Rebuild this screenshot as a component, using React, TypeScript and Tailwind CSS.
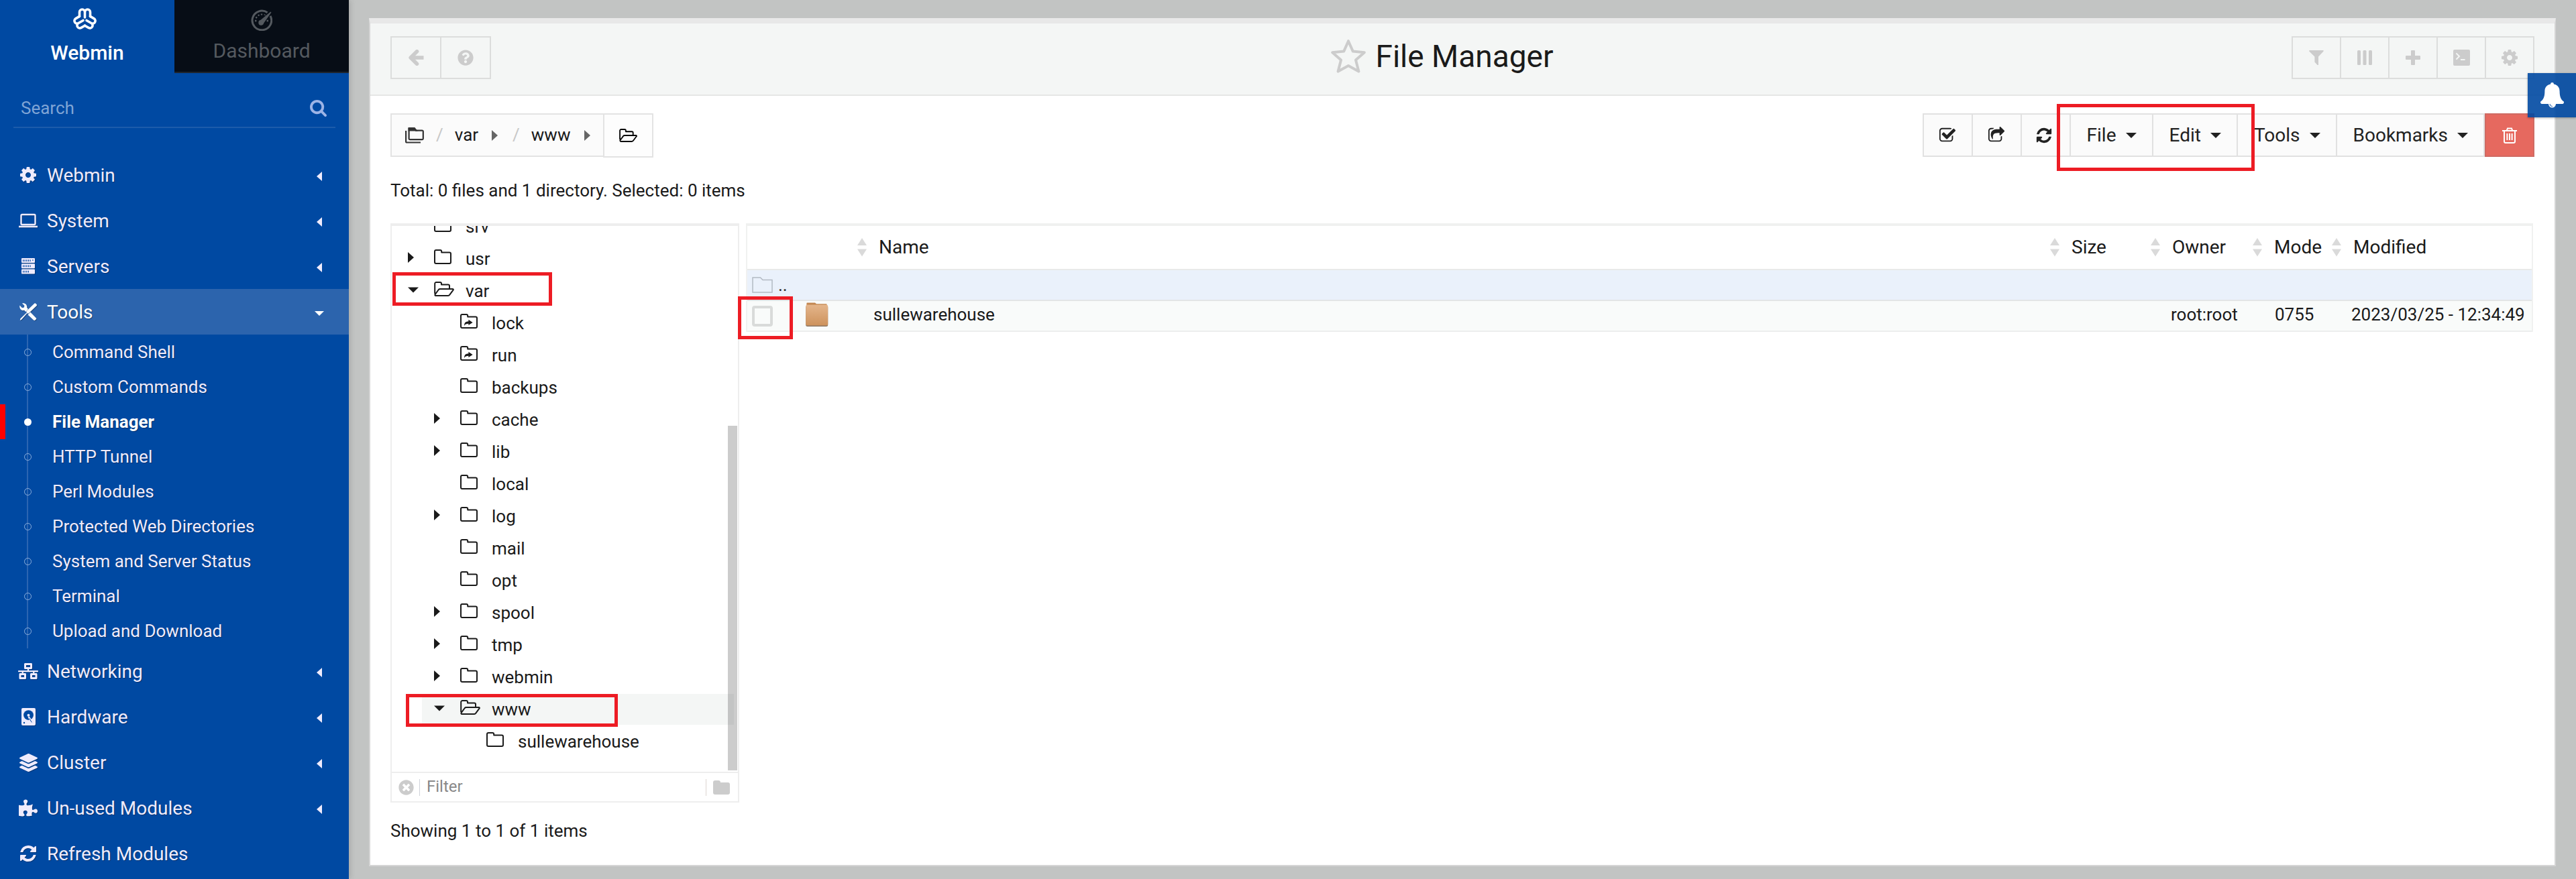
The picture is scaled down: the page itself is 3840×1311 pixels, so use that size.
import React, { ReactNode } from "react";
import { FaNetworkWired, FaLayerGroup, FaPuzzlePiece, FaTimesCircle, FaQuestionCircle } from "react-icons/fa";

/* ---------- icons ---------- */

type IconProps = { className?: string };

const Solid = ({ d, className, box = "0 0 1792 1792" }: { d: string; className?: string; box?: string }) => (
  <svg viewBox={box} className={className} fill="currentColor" aria-hidden="true">
    <path d={d} />
  </svg>
);

const GEAR =
  "M1152 896q0-106-75-181t-181-75-181 75-75 181 75 181 181 75 181-75 75-181zm512-109v222q0 12-8 23t-20 13l-185 28q-19 54-39 91 35 50 107 138 10 12 10 25t-9 23q-27 37-99 108t-94 71q-12 0-26-9l-138-108q-44 23-91 38-16 136-29 186-7 28-36 28h-222q-14 0-24.5-8.5t-11.5-21.5l-28-184q-49-16-90-37l-141 107q-10 9-25 9-14 0-25-11-126-114-165-168-7-10-7-23 0-12 8-23 15-21 51-66.5t54-70.5q-27-50-41-99l-183-27q-13-2-21-12.5t-8-23.5v-222q0-12 8-23t19-13l186-28q14-46 39-92-40-57-107-138-10-12-10-24 0-10 9-23 26-36 98.5-107.5t94.5-71.5q13 0 26 10l138 107q44-23 91-38 16-136 29-186 7-28 36-28h222q14 0 24.5 8.5t11.5 21.5l28 184q49 16 90 37l142-107q9-9 24-9 13 0 25 10 129 119 165 170 7 8 7 22 0 12-8 23-15 21-51 66.5t-54 70.5q26 50 41 98l183 28q13 2 21 12.5t8 23.5z";
const REFRESH =
  "M1639 1056q0 5-1 7-64 268-268 434.5t-478 166.5q-146 0-282.5-55t-243.5-157l-129 129q-19 19-45 19t-45-19-19-45v-448q0-26 19-45t45-19h448q26 0 45 19t19 45-19 45l-137 137q71 66 161 102t187 36q134 0 250-65t186-179q11-17 53-117 8-23 30-23h192q13 0 22.5 9.5t9.5 22.5zm25-800v448q0 26-19 45t-45 19h-448q-26 0-45-19t-19-45 19-45l138-138q-148-137-349-137-134 0-250 65t-186 179q-11 17-53 117-8 23-30 23h-199q-13 0-22.5-9.5t-9.5-22.5v-7q65-268 270-434.5t480-166.5q146 0 284 55.5t245 156.5l130-129q19-19 45-19t45 19 19 45z";
const SEARCH =
  "M1216 832q0-185-131.5-316.5t-316.5-131.5-316.5 131.5-131.5 316.5 131.5 316.5 316.5 131.5 316.5-131.5 131.5-316.5zm512 832q0 52-38 90t-90 38q-54 0-90-38l-343-342q-179 124-399 124-143 0-273.5-55.5t-225-150-150-225-55.5-273.5 55.5-273.5 150-225 225-150 273.5-55.5 273.5 55.5 225 150 150 225 55.5 273.5q0 220-124 399l343 343q37 37 37 90z";
const CHECK_SQUARE =
  "M1472 930v318q0 119-84.5 203.5t-203.5 84.5h-832q-119 0-203.5-84.5t-84.5-203.5v-832q0-119 84.5-203.5t203.5-84.5h832q63 0 117 25 15 7 18 23 3 17-9 29l-49 49q-10 10-23 10-3 0-9-2-23-6-45-6h-832q-66 0-113 47t-47 113v832q0 66 47 113t113 47h832q66 0 113-47t47-113v-254q0-13 9-22l64-64q10-10 23-10 6 0 12 3 20 8 20 29zm231-489l-814 814q-24 24-57 24t-57-24l-430-430q-24-24-24-57t24-57l110-110q24-24 57-24t57 24l263 263 647-647q24-24 57-24t57 24l110 110q24 24 24 57t-24 57z";
const SHARE_SQUARE =
  "M1472 989v259q0 119-84.5 203.5t-203.5 84.5h-832q-119 0-203.5-84.5t-84.5-203.5v-832q0-119 84.5-203.5t203.5-84.5h255q13 0 22.5 9.5t9.5 22.5q0 27-26 32-77 26-133 60-10 4-16 4h-112q-66 0-113 47t-47 113v832q0 66 47 113t113 47h832q66 0 113-47t47-113v-214q0-19 18-29 28-13 54-37 16-16 35-8 21 9 21 29zm237-496l-384 384q-18 19-45 19-12 0-25-5-39-17-39-59v-192h-160q-323 0-438 131-119 137-74 473 3 23-20 34-8 2-12 2-16 0-26-13-10-14-21-31t-39.5-68.5-49.5-99.5-38.5-114-17.5-122q0-49 3.5-91t14-90 28-88 47-81.5 68.5-74 94.5-61.5 124.5-48.5 159.5-30.5 196.5-11h160v-192q0-42 39-59 13-5 25-5 26 0 45 19l384 384q19 19 19 45t-19 45z";

const WebminLogo = () => {
  const lobe = "M-8 -4.6V-11a4 4 0 0 1 8 0V-3M0 -11a4 4 0 0 1 8 0V-4.6";
  return (
    <svg viewBox="-17.5 -17 35 32" className="h-8 w-[35px]" fill="none" stroke="currentColor" strokeWidth="3.6" strokeLinecap="round" strokeLinejoin="round" aria-hidden="true">
      <path d={lobe} />
      <path d={lobe} transform="rotate(120)" />
      <path d={lobe} transform="rotate(240)" />
    </svg>
  );
};

const Gauge = () => (
  <svg viewBox="0 0 32 32" className="size-8" fill="none" stroke="currentColor" aria-hidden="true">
    <path d="M24.6 4.8A14.3 14.3 0 1 0 29 9.8" strokeWidth="3" />
    <path d="M30.5 4.6 29.4 3.4 14.6 15.8a4 4 0 1 0 4.6 4.8z" fill="currentColor" stroke="none" />
    <path d="M6 17h2.4M7.2 11.6l2 1M11 7.8l1.2 1.8M16 6.4v2M21 7.6l-.6 1M23.6 17H26" strokeWidth="2.4" />
  </svg>
);

const Laptop = () => (
  <svg viewBox="0 0 28 22" className="h-[22px] w-7" fill="none" stroke="currentColor" aria-hidden="true">
    <rect x="3.5" y="2" width="21" height="15" rx="1.5" strokeWidth="2.4" />
    <path d="M0 20h28" strokeWidth="2.6" />
  </svg>
);

const ServerStack = () => (
  <svg viewBox="0 0 20 24" className="h-6 w-5" fill="currentColor" aria-hidden="true">
    {[0, 8.3, 16.6].map((y, i) => (
      <g key={y}>
        <rect y={y} width="20" height="7" rx="1" />
        <path d={`M2.6 ${y + 2.2}v2.8M5.2 ${y + 2.2}v2.8M7.8 ${y + 2.2}v2.8M10.4 ${y + 2.2}v2.8${i < 2 ? `M13 ${y + 2.2}v2.8` : ""}`} stroke="#0049a2" strokeWidth="1.2" />
      </g>
    ))}
    <rect x="16" y="2.4" width="1.8" height="1.2" fill="#0049a2" />
  </svg>
);

const WrenchDriver = () => (
  <svg viewBox="0 0 26 26" className="size-[26px]" fill="currentColor" aria-hidden="true">
    <path d="M0.5 3.5 4 7.2 7 6.6 7.4 3.8 4 .4C8-.8 12 2.4 11.2 7L13 9 9.4 13 7.2 10.8C3 11.8-.6 8 .5 3.5z" />
    <path d="M16.2 13.6 25 22.4a2 2 0 0 1 0 1.6L23.4 25.6a2.2 2.2 0 0 1-2.2 0L12.6 17.6z" />
    <path d="M22.4 .6a1.6 1.6 0 0 1 1.6 0L25.6 2a1.6 1.6 0 0 1 0 2L13.2 15.8 11.4 15.2 3 24.8 .8 25.8 1.4 23.2 10.8 14.2 10.2 12.2z" />
  </svg>
);

const HardDisk = () => (
  <svg viewBox="0 0 21 26" className="h-[26px] w-[21px]" aria-hidden="true">
    <rect width="21" height="26" rx="2" fill="currentColor" />
    <circle cx="10.5" cy="10.6" r="7.4" fill="#0049a2" />
    <circle cx="10.5" cy="10.8" r="2" fill="currentColor" />
    <path d="M9.6 13.4 11.8 12.4 17 20.6 14 22.4z" fill="currentColor" />
    <path d="M11.6 15.4 15.4 21.4" stroke="#0049a2" strokeWidth="1" />
    <circle cx="4" cy="22" r="1.2" fill="#0049a2" />
  </svg>
);

const FolderOutline = ({ className = "h-[22px] w-[26px]", link = false }: IconProps & { link?: boolean }) => (
  <svg viewBox="0 0 26 22" className={className} fill="none" stroke="currentColor" strokeWidth="2" strokeLinejoin="round" aria-hidden="true">
    <path d="M1 3a2 2 0 0 1 2-2h6.2a2 2 0 0 1 2 2v1.6H23a2 2 0 0 1 2 2V19a2 2 0 0 1-2 2H3a2 2 0 0 1-2-2z" />
    {link && <path d="M6 18c0-5 2.4-6.6 6.4-6.8V8.8L18.6 13l-6.2 4v-2.2C9.4 14.8 7.4 15.4 6 18z" fill="currentColor" stroke="none" />}
  </svg>
);

const FolderOpen = ({ className = "h-[22px] w-[30px]" }: IconProps) => (
  <svg viewBox="0 0 30 22" className={className} fill="none" stroke="currentColor" strokeWidth="2" strokeLinejoin="round" aria-hidden="true">
    <path d="M1.2 18V3a2 2 0 0 1 2-2H9a2 2 0 0 1 2 2v1.6h10a2 2 0 0 1 2 2V11" />
    <path d="M1.4 19.4 6.8 12A3 3 0 0 1 9 11h18.6a1 1 0 0 1 .9 1.7l-5.2 7A3 3 0 0 1 21 21H3a1.6 1.6 0 0 1-1.6-1.6z" />
  </svg>
);

const Folders = () => (
  <svg viewBox="0 0 28 24" className="h-6 w-7" fill="none" stroke="currentColor" strokeWidth="2.2" aria-hidden="true">
    <path d="M1.1 5v15.9a1.6 1.6 0 0 0 1.6 1.6H23" />
    <path d="M5.6 2.2h8.2l2 2.4h9.4a1.6 1.6 0 0 1 1.6 1.6v10.4a1.6 1.6 0 0 1-1.6 1.6H7.2a1.6 1.6 0 0 1-1.6-1.6z" />
    <path d="M5.6 1.2h8.2l2.6 3.2H5.6z" fill="currentColor" />
  </svg>
);

const ArrowLeft = () => (
  <svg viewBox="0 0 24 24" className="size-6" fill="none" stroke="currentColor" strokeWidth="5.6" strokeLinejoin="round" aria-hidden="true">
    <path d="M23.5 12H6" />
    <path d="M13.5 2.8 4.2 12l9.3 9.2" strokeLinecap="round" />
  </svg>
);

const Funnel = () => <Solid box="0 0 22 22" className="size-[22px]" d="M.4 0h21.2v1.4L14 9.6V22h-1.4L8.4 17.6v-8L.2 1.6z" />;

const Bars = () => (
  <svg viewBox="0 0 22 22" className="size-[22px]" fill="currentColor" aria-hidden="true">
    <rect width="5" height="22" rx="1.5" />
    <rect x="8.5" width="5" height="22" rx="1.5" />
    <rect x="17" width="5" height="22" rx="1.5" />
  </svg>
);

const Plus = () => <Solid box="0 0 22 22" className="size-[22px]" d="M9 0h4a1 1 0 0 1 1 1v7h7a1 1 0 0 1 1 1v4a1 1 0 0 1-1 1h-7v7a1 1 0 0 1-1 1H9a1 1 0 0 1-1-1v-7H1a1 1 0 0 1-1-1V9a1 1 0 0 1 1-1h7V1a1 1 0 0 1 1-1z" />;

const Terminal = () => (
  <svg viewBox="0 0 25 24" className="h-6 w-[25px]" aria-hidden="true">
    <rect width="25" height="24" rx="2" fill="currentColor" />
    <path d="M4.4 5.4 9 10l-4.6 4.6M11 15h6.6" fill="none" stroke="#f4f6f5" strokeWidth="2" />
  </svg>
);

const Trash = () => (
  <svg viewBox="0 0 22 24" className="h-6 w-[22px]" fill="none" stroke="currentColor" strokeWidth="2" aria-hidden="true">
    <path d="M0 5h22M6.8 4.6 8 1.4h6l1.2 3.2M3 5v16a2 2 0 0 0 2 2h12a2 2 0 0 0 2-2V5M7.4 9v10M11 9v10M14.6 9v10" />
  </svg>
);

const Bell = () => (
  <svg viewBox="0 0 35 38" className="h-[38px] w-[35px]" aria-hidden="true">
    <path d="M17.5 0a2.4 2.4 0 0 1 2.4 2.6C25.4 3.6 28.6 7.4 28.6 13c0 8.6 2.2 12.8 6.2 15.6.6 1.6-.4 3.4-1.8 3.4H2c-1.4 0-2.4-1.8-1.8-3.4C4.2 25.8 6.4 21.6 6.4 13c0-5.6 3.2-9.4 8.7-10.4A2.4 2.4 0 0 1 17.5 0z" fill="currentColor" />
    <path d="M12 32a5.5 5.5 0 0 0 11 0z" fill="currentColor" />
    <path d="M14 32a3.8 3.8 0 0 0 3.8 3.6" fill="none" stroke="#1558aa" strokeWidth="1" />
  </svg>
);

const Star = () => (
  <svg viewBox="0 0 52 50" className="h-[50px] w-[52px]" fill="none" stroke="currentColor" strokeWidth="4" strokeLinejoin="round" aria-hidden="true">
    <path d="M26 2.2 32.8 17.6 49.8 19.2 37 30.4 41.4 47.6 26 39 10.6 47.6 15 30.4 2.2 19.2 19.2 17.6z" />
  </svg>
);

const CaretDown = ({ className = "h-2 w-4" }: IconProps) => <Solid box="0 0 16 8" className={className} d="M0 0h16L8 8z" />;
const CaretRight = ({ className = "h-4 w-[9px]" }: IconProps) => <Solid box="0 0 9 16" className={className} d="M0 0 9 8 0 16z" />;
const CaretLeft = () => <Solid box="0 0 8 14" className="h-3.5 w-2" d="M8 0v14L0 7z" />;

const OrangeFolder = () => (
  <svg viewBox="0 0 36 36" className="size-9" aria-hidden="true">
    <defs>
      <linearGradient id="wood" x1="0" y1="0" x2="0" y2="1">
        <stop offset="0" stopColor="#e4b58a" />
        <stop offset="1" stopColor="#cd925c" />
      </linearGradient>
    </defs>
    <path d="M2.4 1.4a1 1 0 0 1 1-1H15l2 1.8h14.6a1 1 0 0 1 1 1V8H2.4z" fill="#c2864f" />
    <rect x="1.2" y="5" width="33" height="31" rx="2.5" fill="#8d7865" />
    <rect x="1.2" y="3.6" width="33" height="31" rx="2.5" fill="url(#wood)" />
  </svg>
);

const SortArrows = () => (
  <svg viewBox="0 0 14 28" className="h-7 w-3.5 shrink-0 text-[#dadada]" fill="currentColor" aria-hidden="true">
    <path d="M7 0 14 11H0zM0 16.5h14L7 27.5z" />
  </svg>
);

/* ---------- sidebar ---------- */

type Menu = { label: string; icon: ReactNode; leaf?: boolean };

const above: Menu[] = [
  { label: "Webmin", icon: <Solid d={GEAR} box="128 128 1536 1536" className="size-6" /> },
  { label: "System", icon: <Laptop /> },
  { label: "Servers", icon: <ServerStack /> },
];
const below: Menu[] = [
  { label: "Networking", icon: <FaNetworkWired className="h-6 w-[30px]" /> },
  { label: "Hardware", icon: <HardDisk /> },
  { label: "Cluster", icon: <FaLayerGroup className="size-[27px]" /> },
  { label: "Un-used Modules", icon: <FaPuzzlePiece className="size-7" /> },
  { label: "Refresh Modules", icon: <Solid d={REFRESH} className="size-7" />, leaf: true },
];
const toolLinks = [
  "Command Shell",
  "Custom Commands",
  "File Manager",
  "HTTP Tunnel",
  "Perl Modules",
  "Protected Web Directories",
  "System and Server Status",
  "Terminal",
  "Upload and Download",
];

function MenuRow({ label, icon, leaf, open }: Menu & { open?: boolean }) {
  return (
    <li>
      <a
        href="#"
        className={
          "flex h-[68px] items-center pr-9 pl-6 text-[28px] text-shadow-[1px_1px_1px_rgba(0,0,0,0.3)] " +
          (open ? "bg-[#2c64ad] text-white" : "text-[#efebfc]")
        }
      >
        <span className="flex w-9 justify-center drop-shadow-[1px_1px_0px_rgba(0,0,0,0.25)]">{icon}</span>
        <span className="ml-2.5 flex-1 pt-0.5">{label}</span>
        {!leaf && <span className="flex w-4 justify-center pt-1">{open ? <CaretDown className="h-[7px] w-3.5" /> : <CaretLeft />}</span>}
      </a>
    </li>
  );
}

function Sidebar() {
  return (
    <aside className="relative z-10 w-[520px] shrink-0 bg-[#0049a2] shadow-[2px_0_8px_rgba(0,0,0,0.15)]">
      <nav className="flex h-[109px] text-[30px] leading-9" aria-label="Sections">
        <a href="#" className="flex flex-1 flex-col items-center gap-[17px] pt-3 font-medium text-white">
          <span className="pr-2">
            <WebminLogo />
          </span>
          Webmin
        </a>
        <a href="#" className="flex flex-1 flex-col items-center gap-3 border-b-2 border-[#1e252e] bg-[#070d16] pt-3.5 text-[#54595f]">
          <Gauge />
          Dashboard
        </a>
      </nav>
      <form className="mx-5 mt-6 mb-9 flex h-[58px] items-center border-b-2 border-[#1c5bab] pr-[13px] pl-[11px]" role="search">
        <input
          type="search"
          aria-label="Search"
          placeholder="Search"
          className="min-w-0 flex-1 bg-transparent text-[26px] text-white outline-none placeholder:text-[#7fa4d5]"
        />
        <button type="button" aria-label="Search" className="text-[#9db4e6]">
          <Solid d={SEARCH} box="64 128 1664 1664" className="size-[25px]" />
        </button>
      </form>
      <ul>
        {above.map((m) => (
          <MenuRow key={m.label} {...m} />
        ))}
        <MenuRow label="Tools" icon={<WrenchDriver />} open />
        <li className="relative">
          <span className="absolute inset-y-0 left-10 w-0.5 bg-[#2c65b1]" />
          <ul>
            {toolLinks.map((t) => {
              const on = t === "File Manager";
              return (
                <li key={t} className={"relative border-l-8 " + (on ? "border-[#ff0000]" : "border-transparent")}>
                  <a
                    href="#"
                    className={
                      "flex h-[52px] items-center pl-7 text-[26px] text-shadow-[1px_1px_1px_rgba(0,0,0,0.3)] " +
                      (on ? "font-bold text-white" : "text-[#efebfc]")
                    }
                  >
                    <span className={"size-[11px] rounded-full " + (on ? "bg-white" : "border border-[#8fb0dc]")} />
                    <span className="ml-[31px]">{t}</span>
                  </a>
                </li>
              );
            })}
          </ul>
        </li>
        {below.map((m) => (
          <MenuRow key={m.label} {...m} />
        ))}
      </ul>
    </aside>
  );
}

/* ---------- header and toolbar ---------- */

function HeadButton({ label, wide, children }: { label: string; wide?: boolean; children: ReactNode }) {
  return (
    <button
      type="button"
      aria-label={label}
      className={"-ml-0.5 flex h-16 items-center justify-center border-2 border-[#dcdddc] text-[#cccccc] first:ml-0 " + (wide ? "w-[76px]" : "w-[74px]")}
    >
      {children}
    </button>
  );
}

function Header() {
  return (
    <header className="grid grid-cols-[1fr_auto_1fr] items-start border-b-2 border-[#e5e6e5] bg-[#f4f6f5] px-[30px] pt-[19px] pb-[23px]">
      <div className="flex">
        <HeadButton label="Back" wide>
          <ArrowLeft />
        </HeadButton>
        <HeadButton label="Help" wide>
          <FaQuestionCircle className="size-6" />
        </HeadButton>
      </div>
      <div className="flex items-center pr-[60px]">
        <button type="button" aria-label="Add to favorites" className="text-[#cccccc]">
          <Star />
        </button>
        <h1 className="ml-3.5 text-[46px] leading-[60px] text-[#1a1a1a]">File Manager</h1>
      </div>
      <div className="flex justify-end">
        <HeadButton label="Filter">
          <Funnel />
        </HeadButton>
        <HeadButton label="Columns">
          <Bars />
        </HeadButton>
        <HeadButton label="New">
          <Plus />
        </HeadButton>
        <HeadButton label="Terminal">
          <Terminal />
        </HeadButton>
        <HeadButton label="Settings">
          <Solid d={GEAR} box="128 128 1536 1536" className="size-6" />
        </HeadButton>
      </div>
    </header>
  );
}

/* Red frame that highlights a control. */
const Mark = ({ className }: { className: string }) => (
  <span className={"pointer-events-none absolute z-20 border-5 border-[#ed1c24] " + className} />
);

const toolClass = "-ml-0.5 flex h-[65px] items-center justify-center border-2 border-[#e1e1e1] bg-[#fbfbfb] text-[#222222] first:ml-0 ";

function MenuButton({ label }: { label: string }) {
  return (
    <button type="button" className={toolClass + "gap-3.5 pr-[23px] pl-6 text-[28px]"}>
      {label}
      <CaretDown />
    </button>
  );
}

function Toolbar() {
  return (
    <div className="flex h-[66px] items-start justify-between">
      <nav className="flex" aria-label="Path">
        <div className="flex h-[65px] items-center border-2 border-[#e3e3e3] bg-[#fbfbfb] pr-[19px] pl-5 text-[26px] text-[#1a1a1a]">
          <a href="#" aria-label="Root" className="text-[#333333]">
            <Folders />
          </a>
          <span className="ml-[18px] text-[#c8c8c8]">/</span>
          <a href="#" className="ml-[17px]">var</a>
          <CaretRight className="ml-5 h-4 w-[9px] text-[#666666]" />
          <span className="ml-[22px] text-[#c8c8c8]">/</span>
          <a href="#" className="ml-[17px]">www</a>
          <CaretRight className="ml-[21px] h-4 w-[9px] text-[#666666]" />
        </div>
        <button type="button" aria-label="Open path" className="-ml-0.5 flex h-[66px] w-[75px] items-center justify-center border-2 border-[#e3e3e3] bg-[#fdfdfd] text-black">
          <FolderOpen className="h-5 w-[27px]" />
        </button>
      </nav>
      <div className="relative flex">
        <button type="button" aria-label="Select all" className={toolClass + "w-[75px]"}>
          <Solid d={CHECK_SQUARE} className="size-[26px]" />
        </button>
        <button type="button" aria-label="Share" className={toolClass + "w-[75px]"}>
          <Solid d={SHARE_SQUARE} className="size-[26px]" />
        </button>
        <button type="button" aria-label="Refresh" className={toolClass + "w-[75px] pr-1"}>
          <Solid d={REFRESH} className="size-[26px]" />
        </button>
        <MenuButton label="File" />
        <MenuButton label="Edit" />
        <MenuButton label="Tools" />
        <MenuButton label="Bookmarks" />
        <button type="button" aria-label="Delete" className="flex h-[65px] w-[74px] items-center justify-center border-2 border-[#cf6a63] bg-[#e6695f] text-white">
          <Trash />
        </button>
        <Mark className="-top-3.5 right-[417px] h-[100px] w-[295px]" />
      </div>
    </div>
  );
}

/* ---------- tree ---------- */

type Node = { name: string; level: 0 | 1 | 2; state: "none" | "closed" | "open"; link?: boolean };

const nodes: Node[] = [
  { name: "srv", level: 0, state: "none" },
  { name: "usr", level: 0, state: "closed" },
  { name: "var", level: 0, state: "open" },
  { name: "lock", level: 1, state: "none", link: true },
  { name: "run", level: 1, state: "none", link: true },
  { name: "backups", level: 1, state: "none" },
  { name: "cache", level: 1, state: "closed" },
  { name: "lib", level: 1, state: "closed" },
  { name: "local", level: 1, state: "none" },
  { name: "log", level: 1, state: "closed" },
  { name: "mail", level: 1, state: "none" },
  { name: "opt", level: 1, state: "none" },
  { name: "spool", level: 1, state: "closed" },
  { name: "tmp", level: 1, state: "closed" },
  { name: "webmin", level: 1, state: "closed" },
  { name: "www", level: 1, state: "open" },
  { name: "sullewarehouse", level: 2, state: "none" },
];

const indent = ["ml-1.5", "ml-[45px]", "ml-[84px]"];

function Tree() {
  return (
    <section className="w-[520px] shrink-0 border-2 border-t-4 border-[#eeeeee]" aria-label="Folders">
      <div className="relative h-[814px] overflow-hidden">
        <ul className="-mt-[23px] pr-1.5">
          {nodes.map((n) => (
            <li key={n.name + n.level} className="relative h-12 py-px">
              <button
                type="button"
                className={
                  "flex h-[46px] items-center pl-[18px] text-left text-[26px] text-[#1a1a1a] " +
                  indent[n.level] +
                  (n.name === "www" ? " w-[465px] bg-[#f4f6f5]" : "")
                }
              >
                <span className="w-[39px] pb-1">
                  {n.state === "closed" && <CaretRight />}
                  {n.state === "open" && <CaretDown className="h-[9px] w-4" />}
                </span>
                <span className="w-[47px] pb-1.5">{n.state === "open" ? <FolderOpen /> : <FolderOutline link={n.link} />}</span>
                {n.name}
              </button>
              {n.name === "var" && <Mark className="-top-1 left-px h-[50px] w-[238px]" />}
              {n.name === "www" && <Mark className="top-px left-[21px] h-[49px] w-[316px]" />}
            </li>
          ))}
        </ul>
        <span className="absolute right-px bottom-0.5 h-[514px] w-3.5 bg-black/20" />
      </div>
      <div className="flex h-11 items-center border-t-2 border-[#eeeeee] pr-3 pl-2.5 text-[#cccccc]">
        <button type="button" aria-label="Clear filter">
          <FaTimesCircle className="size-[23px]" />
        </button>
        <span className="mx-2 h-[25px] w-px bg-[#cfd3da]" />
        <input type="text" aria-label="Filter" placeholder="Filter" className="ml-0.5 min-w-0 flex-1 bg-transparent pb-0.5 text-[24px] text-[#333333] outline-none placeholder:text-[#888888]" />
        <span className="mr-2.5 h-[25px] w-px bg-[#dcd5d0]" />
        <button type="button" aria-label="Filter folders">
          <Solid box="0 0 25 21" className="h-[21px] w-[25px]" d="M0 3a3 3 0 0 1 3-3h5a3 3 0 0 1 3 3h11a3 3 0 0 1 3 3v12a3 3 0 0 1-3 3H3a3 3 0 0 1-3-3z" />
        </button>
      </div>
    </section>
  );
}

/* ---------- file list ---------- */

function Files() {
  return (
    <div className="min-w-0 flex-1">
      <table className="w-full table-fixed border-separate border-spacing-0 border-x-2 border-t-4 border-[#f0f1f0] text-left text-[26px] text-[#1a1a1a]">
        <colgroup>
          <col className="w-[84px]" />
          <col className="w-[76px]" />
          <col />
          <col className="w-[150px]" />
          <col className="w-[152px]" />
          <col className="w-[118px]" />
          <col className="w-[302px]" />
        </colgroup>
        <thead>
          <tr className="h-[66px] text-[28px]">
            <td className="border-b-2 border-[#e8eae9]" colSpan={2} />
            {["Name", "Size", "Owner", "Mode", "Modified"].map((h) => (
              <th key={h} scope="col" className="border-b-2 border-[#e8eae9] p-0 font-normal">
                <button type="button" className="flex items-center gap-[18px] pl-1">
                  <SortArrows />
                  {h}
                </button>
              </th>
            ))}
          </tr>
        </thead>
        <tbody>
          <tr className="h-[46px] bg-[#eaf1fb]">
            <td colSpan={7} className="border-b-2 border-[#e3e5e6] p-0">
              <a href="#" className="flex items-center gap-2 pl-[7px] leading-[44px]">
                <svg viewBox="0 0 31 24" className="h-6 w-[31px]" fill="none" stroke="#b3bac4" strokeWidth="1.5" aria-hidden="true">
                  <path d="M1 1h11.5l3.5 3.5h14V23H1z" />
                </svg>
                ..
              </a>
            </td>
          </tr>
          <tr className="h-[46px] bg-[#f9fbfa] [&>td]:border-b-2 [&>td]:border-[#eceeed] [&>td]:py-0">
            <td className="relative pr-0 pl-[7px]">
              <input type="checkbox" aria-label="Select sullewarehouse" className="block size-[31px] appearance-none rounded-[4px] border-4 border-[#d9dbda] bg-[#f9fbfa]" />
              <Mark className="-top-[7px] -left-3.5 h-16 w-[82px]" />
            </td>
            <td className="px-0">
              <div className="ml-0.5 pb-1">
                <OrangeFolder />
              </div>
            </td>
            <td className="pr-0 pl-7">
              <a href="#" className="block pb-1 leading-10">sullewarehouse</a>
            </td>
            <td />
            <td className="pr-0 pl-[34px]">
              <div className="pb-1 leading-10">root:root</div>
            </td>
            <td className="pr-0 pl-[37px]">
              <div className="pb-1 leading-10">0755</div>
            </td>
            <td className="pr-0 pl-[33px]">
              <div className="pb-1 leading-10 whitespace-nowrap">2023/03/25 - 12:34:49</div>
            </td>
          </tr>
        </tbody>
      </table>
    </div>
  );
}

export default function App() {
  return (
    <div className="relative flex min-h-screen bg-[#c2c4c3] font-[Roboto,sans-serif]">
      <Sidebar />
      <main className="flex min-w-0 flex-1 flex-col px-[30px] pt-[27px] pb-[19px]">
        <div className="flex-1 border-2 border-t-8 border-[#d5d5d5] border-t-[#e8e8e8] bg-white">
          <Header />
          <div className="px-[30px] pt-[26px]">
            <Toolbar />
            <p className="mt-[29px] text-[26px] leading-10 text-[#1a1a1a]">Total: 0 files and 1 directory. Selected: 0 items</p>
            <div className="mt-[29px] mr-0.5 flex gap-2.5">
              <Tree />
              <Files />
            </div>
            <p className="mt-[22px] text-[26px] leading-10 text-[#1a1a1a]">Showing 1 to 1 of 1 items</p>
          </div>
        </div>
      </main>
      <button type="button" aria-label="Notifications" className="absolute top-[109px] right-0 z-20 flex h-[66px] w-[72px] items-center justify-center bg-[#0049a2]/90 text-white shadow-[0_1px_3px_rgba(0,0,0,0.3)]">
        <Bell />
      </button>
    </div>
  );
}
